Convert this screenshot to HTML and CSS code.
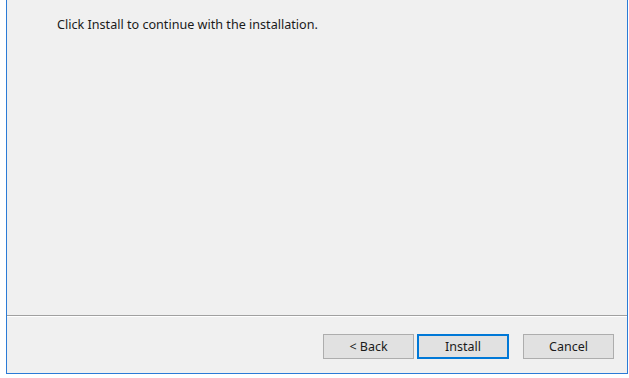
FILE: index.html
```html
<!DOCTYPE html>
<html lang="en">
<head>
  <meta charset="UTF-8">
  <title>Setup - Ready to Install</title>
  <link rel="stylesheet" href="styles.css">
</head>
<body>
  <div class="window">
    <div class="content">
      <p class="message">Click Install to continue with the installation.</p>
    </div>
    <div class="footer">
      <button class="btn">&lt; Back</button>
      <button class="btn btn-default">Install</button>
      <button class="btn btn-cancel">Cancel</button>
    </div>
  </div>
</body>
</html>
```

FILE: styles.css
```css
body {
  margin: 0;
  padding: 0;
  background: #ffffff;
  font-family: 'Noto Sans', 'Open Sans', sans-serif;
  font-size: 12px;
  color: #000;
}
.window {
  margin-left: 6px;
  width: 620px;
  height: 373px;
  background: #f0f0f0;
  border-left: 1px solid #2b7bd6;
  border-right: 1px solid #2b7bd6;
  border-bottom: 1px solid #2b7bd6;
  display: flex;
  flex-direction: column;
}
.content {
  flex: 1;
  padding: 16px 0 0 50px;
}
.message {
  margin: 0;
  font-size: 12.6px;
  line-height: 17px;
  color: #1a1a1a;
}
.footer {
  height: 58px;
  box-sizing: border-box;
  border-top: 1px solid #a0a0a0;
  box-shadow: inset 0 1px 0 #ffffff;
  display: flex;
  justify-content: flex-end;
  align-items: flex-start;
  padding: 18px 13px 0 0;
}
.btn {
  width: 91px;
  height: 25px;
  background: #e1e1e1;
  border: 1px solid #adadad;
  font-family: inherit;
  font-size: 12.5px;
  color: #1a1a1a;
  padding: 0;
  margin: 0;
}
.btn-default {
  margin-left: 3px;
  width: 92px;
  border: 2px solid #0078d7;
}
.btn-cancel {
  margin-left: 14px;
}
```
